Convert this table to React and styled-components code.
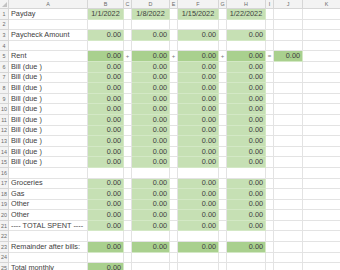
import React from 'react';
import styled, { createGlobalStyle } from 'styled-components';

const GlobalStyle = createGlobalStyle`
  html, body { margin: 0; padding: 0; background: #fff; overflow: hidden; }
  body { font-family: "Liberation Sans", Arial, sans-serif; }
`;

const LETTERS = ['A', 'B', 'C', 'D', 'E', 'F', 'G', 'H', 'I', 'J', 'K'];
const WIDTHS = [79, 36, 8, 38, 8, 41, 8, 39, 8, 29, 48];
const WEEKS = ['1/1/2022', '1/8/2022', '1/15/2022', '1/22/2022'];

const FILLS = {
  light: '#c6e0b4',
  dark: '#a9d08e',
};

const ROWS = [
  { label: 'Payday', dates: true, fill: 'light' },
  {},
  { label: 'Paycheck Amount', fill: 'light', zero: true },
  {},
  { label: 'Rent', fill: 'dark', zero: true, ops: true },
  ...Array.from({ length: 10 }, () => ({ label: 'Bill (due )', fill: 'light', zero: true })),
  {},
  { label: 'Groceries', fill: 'light', zero: true },
  { label: 'Gas', fill: 'light', zero: true },
  { label: 'Other', fill: 'light', zero: true },
  { label: 'Other', fill: 'light', zero: true },
  { label: '---- TOTAL SPENT ----', fill: 'light', zero: true },
  {},
  { label: 'Remainder after bills:', fill: 'dark', zero: true },
  {},
  { label: 'Total monthly', fill: 'dark', zero: true, onlyFirst: true },
];

const Sheet = styled.div`
  display: grid;
  grid-template-columns: 9px ${WIDTHS.map((w) => `${w}px`).join(' ')};
  grid-template-rows: 9px;
  grid-auto-rows: 10.6px;
  width: max-content;
  color: #404040;
`;

const HeadCell = styled.div`
  box-sizing: border-box;
  background: #f3f3f3;
  border-right: 1px solid #d6d6d6;
  border-bottom: 1px solid #d6d6d6;
  color: #6a6a6a;
  font-size: 5.4px;
  display: flex;
  align-items: center;
  justify-content: center;
  overflow: hidden;
`;

const Corner = styled(HeadCell)`
  position: relative;
  &::after {
    content: "";
    position: absolute;
    right: 1px;
    bottom: 1px;
    border-left: 5px solid transparent;
    border-bottom: 5px solid #c3c3c3;
  }
`;

const Cell = styled.div`
  box-sizing: border-box;
  background: ${(p) => (p.$fill ? FILLS[p.$fill] : '#fff')};
  border-right: 1px solid ${(p) => (p.$fill ? '#d3e8c5' : '#e3e3e3')};
  border-bottom: 1px solid ${(p) => (p.$fill ? '#d3e8c5' : '#e3e3e3')};
  font-size: 7.3px;
  line-height: 10px;
  padding: 0 2px;
  white-space: nowrap;
  overflow: visible;
  display: flex;
  align-items: center;
  justify-content: ${(p) => p.$align || 'flex-start'};
`;

const Op = styled(Cell)`
  padding: 0;
  font-size: 6px;
  color: #7a7a7a;
`;

function valueCell(row, week) {
  if (row.dates) return { text: WEEKS[week], fill: row.fill, align: 'center' };
  if (row.onlyFirst && week > 0) return {};
  if (row.zero) return { text: '0.00', fill: row.fill, align: 'flex-end' };
  return {};
}

const App = () => {
  return (
    <>
      <GlobalStyle />
      <Sheet>
        <Corner />
        {LETTERS.map((l) => (
          <HeadCell key={l}>{l}</HeadCell>
        ))}
        {ROWS.map((row, i) => (
          <React.Fragment key={i}>
            <HeadCell>{i + 1}</HeadCell>
            <Cell>{row.label}</Cell>
            {[0, 1, 2, 3].map((w) => {
              const v = valueCell(row, w);
              return (
                <React.Fragment key={w}>
                  <Cell $fill={v.fill} $align={v.align}>{v.text}</Cell>
                  <Op $align="center">{row.ops ? (w === 3 ? '=' : '+') : ''}</Op>
                </React.Fragment>
              );
            })}
            {row.ops ? (
              <Cell $fill="dark" $align="flex-end">0.00</Cell>
            ) : (
              <Cell />
            )}
            <Cell />
          </React.Fragment>
        ))}
      </Sheet>
    </>
  );
};

export default App;
